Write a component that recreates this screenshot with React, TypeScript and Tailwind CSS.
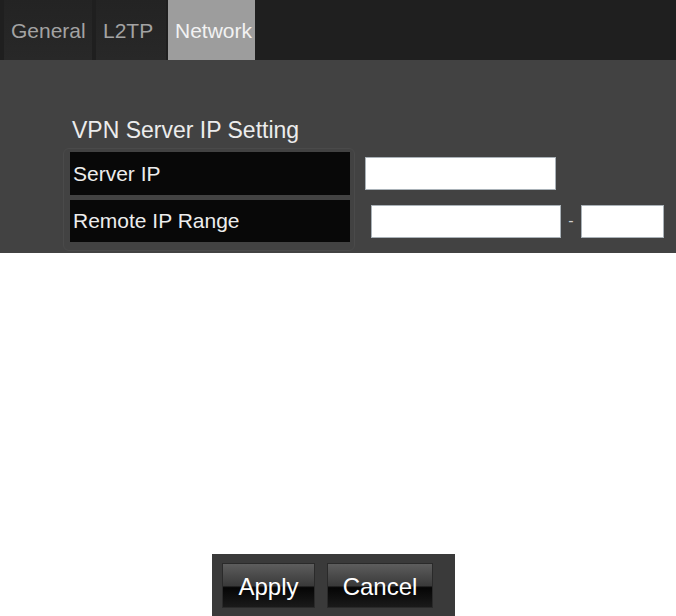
import { useState } from "react";

const FONT = { fontFamily: '"Liberation Sans", Arial, sans-serif' };

const tabs = [
  { name: "General", w: "w-[88px] ml-[4px]" },
  { name: "L2TP", w: "w-[70px] ml-[4px]" },
  { name: "Network", w: "w-[87px] ml-[2px]" },
];

export default function App() {
  const [active, setActive] = useState("Network");
  const [serverIp, setServerIp] = useState("");
  const [rangeStart, setRangeStart] = useState("");
  const [rangeEnd, setRangeEnd] = useState("");

  return (
    <div className="w-[676px] h-[616px] bg-white flex flex-col" style={FONT}>
      {/* Tab bar */}
      <div className="h-[60px] bg-[#1f1f1f] flex">
        {tabs.map((t) => (
          <button
            key={t.name}
            onClick={() => setActive(t.name)}
            className={`${t.w} h-full text-[21px] text-left pl-[7px] pt-[2px] ${
              active === t.name
                ? "bg-[#9d9d9d] text-[#f2f2f2]"
                : "bg-gradient-to-b from-[#232323] to-[#282828] text-[#a3a3a3]"
            }`}
          >
            {t.name}
          </button>
        ))}
      </div>

      {/* Settings panel */}
      <section className="h-[193px] bg-[#424242] pt-[56px] pl-[63px]">
        <h2 className="pl-[9px] text-[23px] leading-[28px] text-[#ececec]">
          VPN Server IP Setting
        </h2>
        <div className="mt-[4px] w-[292px] rounded-[6px] border border-[#4a4a4a] pt-[3px] pl-[6px] pb-[8px] flex flex-col gap-[5px]">
          {/* Server IP */}
          <div className="flex items-center">
            <div className="w-[280px] h-[43px] shrink-0 bg-[#080808] text-[#ededed] text-[21px] pl-[3px] flex items-center">
              Server IP
            </div>
            <input
              value={serverIp}
              onChange={(e) => setServerIp(e.target.value)}
              className="ml-[15px] shrink-0 w-[191px] h-[33px] bg-white border border-[#aab2b8] outline-none px-1 text-sm"
            />
          </div>
          {/* Remote IP Range */}
          <div className="flex items-center">
            <div className="w-[280px] h-[42px] shrink-0 bg-[#080808] text-[#ededed] text-[21px] pl-[3px] flex items-center">
              Remote IP Range
            </div>
            <input
              value={rangeStart}
              onChange={(e) => setRangeStart(e.target.value)}
              className="ml-[21px] shrink-0 w-[190px] h-[33px] bg-white border border-[#aab2b8] outline-none px-1 text-sm"
            />
            <span className="w-[20px] shrink-0 text-center text-[#d0d0d0] text-[16px]">-</span>
            <input
              value={rangeEnd}
              onChange={(e) => setRangeEnd(e.target.value)}
              className="shrink-0 w-[83px] h-[33px] bg-white border border-[#aab2b8] outline-none px-1 text-sm"
            />
          </div>
        </div>
      </section>

      {/* Buttons */}
      <div className="mt-auto ml-[212px] w-[243px] h-[62px] bg-[#3a3a3a] flex gap-[12px] pl-[10px] pt-[9px]">
        <button className="w-[93px] h-[45px] text-white text-[24px] pt-[2px] bg-[linear-gradient(to_bottom,#5d5d5d_0%,#3a3a3a_50%,#050505_55%,#1a1a1a_100%)] border border-[#2a2a2a]">
          Apply
        </button>
        <button className="w-[106px] h-[45px] text-white text-[24px] pt-[2px] bg-[linear-gradient(to_bottom,#5d5d5d_0%,#3a3a3a_50%,#050505_55%,#1a1a1a_100%)] border border-[#2a2a2a]">
          Cancel
        </button>
      </div>
    </div>
  );
}
